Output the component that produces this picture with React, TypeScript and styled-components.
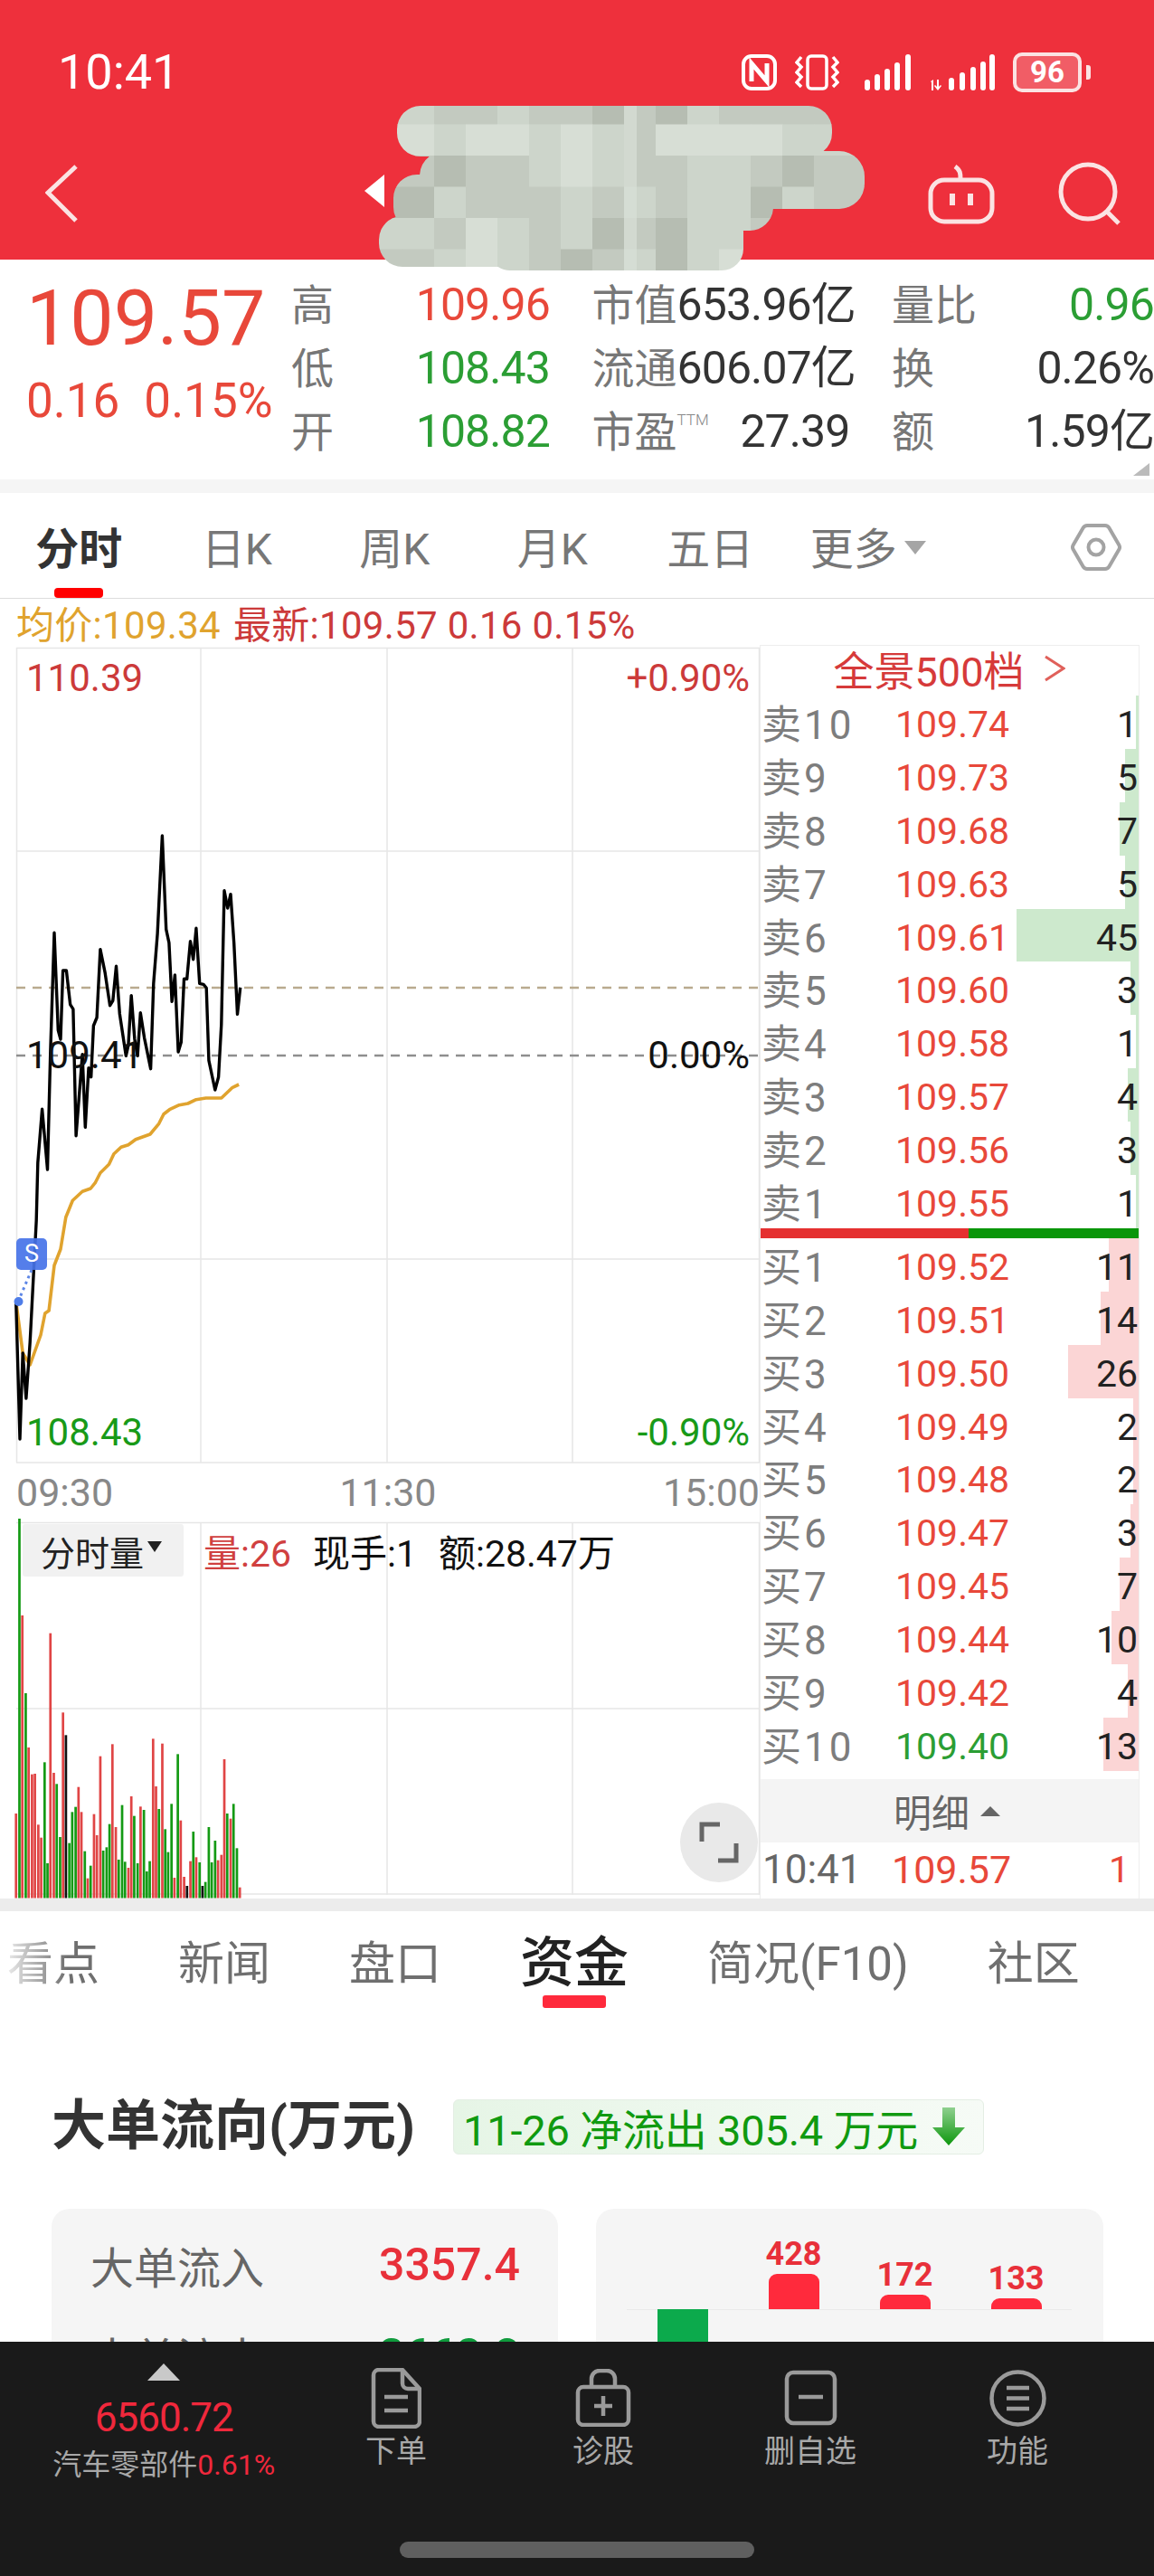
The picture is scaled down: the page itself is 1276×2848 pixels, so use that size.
import React from "react";
import styled, { createGlobalStyle } from "styled-components";

const FONT = `Roboto, "Noto Sans CJK SC", sans-serif`;
const RED = "#e8483a";
const GREEN = "#2b9e34";

const GlobalStyle = createGlobalStyle`
  html, body {
    margin: 0;
    padding: 0;
    background: #fff;
  }
  * {
    box-sizing: border-box;
  }
`;

// traced from the reference: x scale 1/1.867, y scale 1/3
const pricePoints = [
  [33, 1320], [41, 1776], [47, 1491], [54, 1641], [62, 1455], [75, 1050], [78, 860], [87, 682], [98, 882],
  [104, 500], [112, 97], [120, 420], [125, 450], [130, 222], [137, 222], [145, 335], [151, 350], [157, 770],
  [170, 500], [176, 742], [183, 545], [188, 575], [193, 405], [200, 378], [207, 152], [217, 230], [227, 338],
  [233, 322], [240, 208], [247, 365], [260, 505], [265, 470], [271, 305], [278, 450], [284, 505], [290, 362],
  [298, 445], [311, 548], [317, 265], [325, 100], [335, -225], [343, 85], [349, 130], [355, 325], [361, 237],
  [368, 492], [374, 460], [380, 250], [386, 250], [393, 125], [399, 185], [405, 82], [412, 265], [420, 268],
  [426, 280], [431, 520], [444, 618], [451, 575], [457, 400], [463, -43], [470, 15], [476, -31], [483, 130],
  [490, 367], [496, 278],
];

const avgPoints = [
  [33, 1320], [47, 1491], [62, 1530], [84, 1431], [93, 1359], [101, 1350], [112, 1200], [125, 1146], [136, 1040],
  [150, 985], [170, 955], [187, 945], [197, 925], [207, 893], [225, 865], [235, 830],
  [250, 808], [265, 800], [280, 782], [310, 765], [328, 730], [338, 698], [350, 683], [370, 668], [388, 663],
  [405, 650], [425, 645], [457, 645], [480, 610], [493, 600],
];

const toPolyline = (pts: number[][]) =>
  pts.map(([x, y]) => `${(x / 1.867 - 18).toFixed(1)},${(283 + y / 3).toFixed(1)}`).join(" ");

type VolBar = [number, "r" | "g" | "k", number];
const volumeBars: VolBar[] = [
  [33, "r", 1035], [40, "g", 57], [46, "r", 378], [53, "g", 636], [59, "r", 816], [66, "r", 905], [72, "r", 903],
  [79, "r", 1072], [85, "r", 1115], [92, "g", 865], [98, "g", 1200], [104, "r", 437], [111, "r", 900], [117, "g", 937],
  [124, "g", 1113], [130, "r", 700], [136, "k", 775], [143, "g", 1133], [149, "g", 1030], [156, "g", 1013],
  [162, "r", 947], [168, "r", 1030], [175, "g", 1160], [181, "r", 1250], [187, "g", 1208], [194, "r", 1037],
  [200, "r", 1107], [207, "r", 845], [213, "g", 1158], [220, "g", 1147], [226, "g", 1070], [232, "r", 805],
  [239, "r", 1080], [245, "g", 1188], [252, "g", 1007], [258, "g", 1195], [265, "r", 1215], [271, "r", 978],
  [277, "g", 1043], [284, "g", 1200], [290, "r", 1012], [297, "g", 1023], [303, "g", 1227], [309, "g", 1193],
  [316, "r", 787], [322, "r", 945], [328, "g", 1020], [335, "r", 803], [341, "g", 1087], [347, "g", 1163],
  [354, "g", 1003], [360, "r", 1248], [367, "g", 838], [373, "r", 1058], [380, "r", 1245], [386, "k", 1275],
  [393, "r", 1193], [399, "g", 1095], [405, "r", 1180], [412, "g", 1197], [418, "k", 1275], [424, "g", 1262],
  [431, "g", 1080], [437, "g", 1197], [444, "g", 1125], [450, "r", 1190], [457, "r", 1172], [463, "r", 855],
  [469, "g", 1035], [476, "r", 1052], [482, "g", 1003], [489, "g", 1150], [495, "r", 1280],
];
const volColor = { r: "#e04545", g: "#149a14", k: "#111" };

const sells = [
  ["卖10", "109.74", 1], ["卖9", "109.73", 5], ["卖8", "109.68", 7], ["卖7", "109.63", 5], ["卖6", "109.61", 45],
  ["卖5", "109.60", 3], ["卖4", "109.58", 1], ["卖3", "109.57", 4], ["卖2", "109.56", 3], ["卖1", "109.55", 1],
] as const;
const buys = [
  ["买1", "109.52", 11], ["买2", "109.51", 14], ["买3", "109.50", 26], ["买4", "109.49", 2], ["买5", "109.48", 2],
  ["买6", "109.47", 3], ["买7", "109.45", 7], ["买8", "109.44", 10], ["买9", "109.42", 4], ["买10", "109.40", 13],
] as const;

const mosaicPalette: Record<string, string> = {
  a: "#d7ded5", b: "#cdd5cb", c: "#c3cac0", d: "#b6bdb2", e: "#a8afa4",
};
const mosaicRows = [
  "bbccbccdcdbccccc",
  "aabaababcaaaabbb",
  "ccdccbabccbbcdcc",
  "ddbcccbcbcbbdbcc",
  "bbcabcbdcdbbcccc",
  "ccbabcdcbdbacccc",
];

function Mosaic() {
  return (
    <MosaicSvg viewBox="0 0 560 200" width="560" height="200">
      <defs>
        <clipPath id="smear">
          <rect x="29" y="14" width="481" height="56" rx="26" />
          <rect x="54" y="64" width="492" height="64" rx="28" />
          <rect x="25" y="90" width="420" height="62" rx="26" />
          <rect x="9" y="136" width="352" height="56" rx="26" />
          <rect x="130" y="130" width="282" height="66" rx="24" />
        </clipPath>
      </defs>
      <g clipPath="url(#smear)">
        {mosaicRows.map((row, r) =>
          row.split("").map((c, i) => (
            <rect key={`${r}-${i}`} x={i * 35} y={r * 34.5} width={35.5} height={35} fill={mosaicPalette[c]} />
          ))
        )}
        <rect x="280" y="0" width="14" height="200" fill="#d9e0d7" opacity="0.7" />
      </g>
    </MosaicSvg>
  );
}

export default function App() {
  return (
    <Page>
      <GlobalStyle />
      <ScrollArea>
        <Header>
          <StatusBar>
            <Clock>10:41</Clock>
            <StatusIcons>
              <svg width="39" height="40" viewBox="0 0 39 40" fill="none" stroke="#fff" strokeWidth="4">
                <rect x="2" y="2" width="35" height="36" rx="9" />
                <path d="M11 30V10l17 20V10" strokeWidth="5" />
              </svg>
              <svg width="49" height="40" viewBox="0 0 49 40" fill="none" stroke="#fff" strokeWidth="3.5">
                <rect x="14" y="2" width="21" height="36" rx="4" />
                <path d="M7 3L2 9l5 5-5 6 5 5-5 6 5 5" />
                <path d="M42 3l5 6-5 5 5 6-5 5 5 6-5 5" />
              </svg>
              <SignalIcon width="51" height="40" viewBox="0 0 51 40" fill="#fff">
                <rect x="0" y="28" width="6" height="12" rx="3" />
                <rect x="11" y="22" width="6" height="18" rx="3" />
                <rect x="22" y="16" width="6" height="24" rx="3" />
                <rect x="33" y="9" width="6" height="31" rx="3" />
                <rect x="45" y="0" width="6" height="40" rx="3" />
              </SignalIcon>
              <svg width="73" height="40" viewBox="0 0 73 40" fill="#fff">
                <path d="M2 30l3-2v12H3V31zM9 28h2v8l2-2 1 1-4 5-4-5 1-1 2 2z" />
                <rect x="22" y="26" width="6" height="14" rx="3" />
                <rect x="34" y="20" width="6" height="20" rx="3" />
                <rect x="46" y="14" width="6" height="26" rx="3" />
                <rect x="57" y="8" width="6" height="32" rx="3" />
                <rect x="67" y="0" width="6" height="40" rx="3" />
              </svg>
              <Battery>96</Battery>
            </StatusIcons>
          </StatusBar>
          <NavRow>
            <svg width="36" height="64" viewBox="0 0 36 64" fill="none" stroke="#fbe3e3" strokeWidth="5">
              <path d="M34 2L3 31l31 31" />
            </svg>
            <NavRight>
              <svg width="74" height="68" viewBox="0 0 74 68" fill="none" stroke="#fbe3e3" strokeWidth="5">
                <path d="M36 18c0-6 0-10-6-14" />
                <rect x="3" y="19" width="68" height="46" rx="15" />
                <path d="M27 34v13M47 34v13" strokeWidth="6" />
              </svg>
              <svg width="70" height="70" viewBox="0 0 70 70" fill="none" stroke="#fbe3e3" strokeWidth="5">
                <circle cx="33" cy="33" r="30" />
                <path d="M54 55l13 13" />
              </svg>
            </NavRight>
          </NavRow>
          <WhiteArrow />
          <Mosaic />
        </Header>

        <Quote>
          <QuoteMain>
            <BigPrice>109.57</BigPrice>
            <BigChange>
              <span>0.16</span>
              <span>0.15%</span>
            </BigChange>
          </QuoteMain>
          <QuoteGrid>
            <QuoteCell><QuoteLabel>高</QuoteLabel><QuoteValue $color={RED}>109.96</QuoteValue></QuoteCell>
            <QuoteCell><QuoteLabel>市值</QuoteLabel><QuoteValue>653.96亿</QuoteValue></QuoteCell>
            <QuoteCell><QuoteLabel>量比</QuoteLabel><QuoteValue $color={GREEN}>0.96</QuoteValue></QuoteCell>
            <QuoteCell><QuoteLabel>低</QuoteLabel><QuoteValue $color={GREEN}>108.43</QuoteValue></QuoteCell>
            <QuoteCell><QuoteLabel>流通</QuoteLabel><QuoteValue>606.07亿</QuoteValue></QuoteCell>
            <QuoteCell><QuoteLabel>换</QuoteLabel><QuoteValue>0.26%</QuoteValue></QuoteCell>
            <QuoteCell><QuoteLabel>开</QuoteLabel><QuoteValue $color={GREEN}>108.82</QuoteValue></QuoteCell>
            <QuoteCell><QuoteLabel>市盈<Ttm>TTM</Ttm></QuoteLabel><QuoteValue>27.39</QuoteValue></QuoteCell>
            <QuoteCell><QuoteLabel>额</QuoteLabel><QuoteValue>1.59亿</QuoteValue></QuoteCell>
          </QuoteGrid>
          <CornerMark />
        </Quote>

        <Band $h={15} $bg="#f5f5f5" />

        <PeriodTabs>
          <PeriodTab $active>分时</PeriodTab>
          <PeriodTab>日K</PeriodTab>
          <PeriodTab>周K</PeriodTab>
          <PeriodTab>月K</PeriodTab>
          <PeriodTab>五日</PeriodTab>
          <PeriodTab>更多<MoreCaret /></PeriodTab>
          <SettingsIcon width="56" height="52" viewBox="0 0 56 52" fill="none" stroke="#a3a3a3" strokeWidth="4">
            <path
              d="M18 2h20a5 5 0 0 1 4.3 2.5l11 19a5 5 0 0 1 0 5l-11 19A5 5 0 0 1 38 50H18a5 5 0 0 1-4.3-2.5l-11-19a5 5 0 0 1 0-5l11-19A5 5 0 0 1 18 2z"
            />
            <circle cx="28" cy="26" r="8.5" />
          </SettingsIcon>
        </PeriodTabs>

        <Legend>
          <LegendText $color="#e0a32e">均价:109.34</LegendText>
          <LegendText $color="#cc3a3a">最新:109.57 0.16 0.15%</LegendText>
        </Legend>

        <Market>
          <ChartColumn>
            <PriceChart>
              <ChartSvg width="822" height="900" viewBox="0 0 822 900" fill="none">
                <g stroke="#e6e6e6" strokeWidth="1.5">
                  <path d="M0 0.5H822M0 225H822M0 676H822M0 901H822" />
                  <path d="M0.5 0V901M204 0V901M410 0V901M615 0V901M821.5 0V901" />
                </g>
                <path d="M0 376H822" stroke="#b9aa8e" strokeWidth="2.5" strokeDasharray="10 8" />
                <path d="M0 451H822" stroke="#8e8e8e" strokeWidth="2.5" strokeDasharray="10 8" />
                <polyline points={toPolyline(avgPoints)} stroke="#e0a32e" strokeWidth="3.6" strokeLinejoin="round" />
                <polyline points={toPolyline(pricePoints)} stroke="#000" strokeWidth="3.4" strokeLinejoin="round" />
                <path d="M2 723L17 688" stroke="#5d86e6" strokeWidth="3" strokeDasharray="3 4" />
                <circle cx="2.5" cy="723" r="5" fill="#4f7de8" />
              </ChartSvg>
              <ChartLabel $y={34} $left $color="#cc3a3a">110.39</ChartLabel>
              <ChartLabel $y={34} $color="#cc3a3a">+0.90%</ChartLabel>
              <ChartLabel $y={451} $left $color="#111">109.41</ChartLabel>
              <ChartLabel $y={451} $color="#111">0.00%</ChartLabel>
              <ChartLabel $y={868} $left $color="#189a18">108.43</ChartLabel>
              <ChartLabel $y={868} $color="#189a18">-0.90%</ChartLabel>
              <SignalBadge>S</SignalBadge>
            </PriceChart>
            <TimeAxis>
              <span>09:30</span>
              <span>11:30</span>
              <span>15:00</span>
            </TimeAxis>
            <VolumeChart>
              <ChartSvg width="822" height="412" viewBox="0 0 822 412" fill="none">
                <g stroke="#e6e6e6" strokeWidth="1.5">
                  <path d="M0 0.5H822M0 206H822M0 411H822" />
                  <path d="M204 0V412M410 0V412M615 0V412M821.5 0V412" />
                </g>
                {volumeBars.map(([x, c, top]) => {
                  const y = top / 3 - 23;
                  return <rect key={x} x={x / 1.867 - 19.3} y={y} width={2.7} height={415.5 - y} fill={volColor[c]} />;
                })}
              </ChartSvg>
              <VolumeHead>
                <VolumeSelect>分时量<SelectCaret /></VolumeSelect>
                <VolumeInfo $color="#d04040">量:26</VolumeInfo>
                <VolumeInfo>现手:1</VolumeInfo>
                <VolumeInfo>额:28.47万</VolumeInfo>
              </VolumeHead>
              <ExpandButton>
                <svg width="44" height="46" viewBox="0 0 44 46" fill="none" stroke="#666" strokeWidth="5">
                  <path d="M3 22V3h20" />
                  <path d="M41 24v19H21" />
                </svg>
              </ExpandButton>
            </VolumeChart>
          </ChartColumn>

          <Book>
            <BookTitle>
              全景500档
              <svg width="24" height="30" viewBox="0 0 24 30" fill="none" stroke="#e0605a" strokeWidth="3">
                <path d="M2 2l20 13L2 28" />
              </svg>
            </BookTitle>
            {sells.map(([name, price, qty]) => (
              <BookRow key={name}>
                <QtyBar $side="sell" style={{ width: qty * 3 }} />
                <BookName>{name}</BookName>
                <BookPrice>{price}</BookPrice>
                <BookQty>{qty}</BookQty>
              </BookRow>
            ))}
            <BalanceBar>
              <BalancePart $w={55} $color="#e53030" />
              <BalancePart $w={45} $color="#0a960a" />
            </BalanceBar>
            {buys.map(([name, price, qty]) => (
              <BookRow key={name}>
                <QtyBar $side="buy" style={{ width: qty * 3 }} />
                <BookName>{name}</BookName>
                <BookPrice $green={name === "买10"}>{price}</BookPrice>
                <BookQty>{qty}</BookQty>
              </BookRow>
            ))}
            <DetailHead>明细<DetailCaret /></DetailHead>
            <TradeRow>
              <TradeTime>10:41</TradeTime>
              <TradePrice>109.57</TradePrice>
              <TradeQty>1</TradeQty>
            </TradeRow>
          </Book>
        </Market>

        <Band $h={14} $bg="#ececec" />

        <SectionTabs>
          <SectionTab $fade>看点</SectionTab>
          <SectionTab>新闻</SectionTab>
          <SectionTab>盘口</SectionTab>
          <SectionTab $active>资金</SectionTab>
          <SectionTab>简况(F10)</SectionTab>
          <SectionTab>社区</SectionTab>
        </SectionTabs>

        <FlowHead>
          <FlowTitle>大单流向(万元)</FlowTitle>
          <NetBadge>
            11-26 净流出 305.4 万元
            <svg width="36" height="42" viewBox="0 0 36 42">
              <defs>
                <linearGradient id="arrow" x1="0" y1="0" x2="0" y2="1">
                  <stop offset="0" stopColor="#8fd08f" />
                  <stop offset="1" stopColor="#0d970d" />
                </linearGradient>
              </defs>
              <path d="M11 0h14v22h11L18 42 0 22h11z" fill="url(#arrow)" />
            </svg>
          </NetBadge>
        </FlowHead>

        <Cards>
          <Card>
            <AmountRow>
              <AmountName>大单流入</AmountName>
              <Amount $color="#e8303a">3357.4</Amount>
            </AmountRow>
            <AmountRow>
              <AmountName>大单流出</AmountName>
              <Amount $color="#0f9a3c">3662.8</Amount>
            </AmountRow>
          </Card>
          <Card>
            <Plot>
              <PlotCol>
                <DownBar />
              </PlotCol>
              <PlotCol>
                <PlotValue>428</PlotValue>
                <UpBar $h={39} />
              </PlotCol>
              <PlotCol>
                <PlotValue>172</PlotValue>
                <UpBar $h={16} />
              </PlotCol>
              <PlotCol>
                <PlotValue>133</PlotValue>
                <UpBar $h={12} />
              </PlotCol>
            </Plot>
          </Card>
        </Cards>
      </ScrollArea>

      <BottomBar>
        <BottomItems>
          <IndexBlock>
            <IndexCaret />
            <IndexValue>6560.72</IndexValue>
            <IndexName>
              汽车零部件<IndexPct>0.61%</IndexPct>
            </IndexName>
          </IndexBlock>
          <BottomItem>
            <IconSlot>
              <svg width="56" height="67" viewBox="0 0 56 67" fill="none" stroke="#9a9a9a" strokeWidth="4.5">
                <path d="M9 2h26l19 21v36a6 6 0 0 1-6 6H9a6 6 0 0 1-6-6V8a6 6 0 0 1 6-6z" strokeLinejoin="round" />
                <path d="M35 2v15a6 6 0 0 0 6 6h13" />
                <path d="M15 32h26M15 47h26" />
              </svg>
            </IconSlot>
            下单
          </BottomItem>
          <BottomItem>
            <IconSlot>
              <svg width="62" height="64" viewBox="0 0 62 64" fill="none" stroke="#9a9a9a" strokeWidth="4.5">
                <path d="M18 20V11a9 9 0 0 1 9-9h8a9 9 0 0 1 9 9v9" />
                <rect x="3" y="20" width="56" height="42" rx="6" />
                <path d="M31 30v22M21 41h20" />
              </svg>
            </IconSlot>
            诊股
          </BottomItem>
          <BottomItem>
            <IconSlot>
              <svg width="59" height="62" viewBox="0 0 59 62" fill="none" stroke="#9a9a9a" strokeWidth="4.5">
                <rect x="3" y="3" width="53" height="56" rx="7" />
                <path d="M16 30h27" />
              </svg>
            </IconSlot>
            删自选
          </BottomItem>
          <BottomItem>
            <IconSlot>
              <svg width="63" height="63" viewBox="0 0 63 63" fill="none" stroke="#9a9a9a" strokeWidth="4.5">
                <circle cx="31.5" cy="31.5" r="29" />
                <path d="M19 20h25M19 31.5h25M19 43h25" />
              </svg>
            </IconSlot>
            功能
          </BottomItem>
        </BottomItems>
        <HomeBar />
      </BottomBar>
    </Page>
  );
}

const Page = styled.div`
  width: 1276px;
  height: 2848px;
  display: flex;
  flex-direction: column;
  overflow: hidden;
  background: #fff;
  font-family: ${FONT};
`;

const ScrollArea = styled.div`
  flex: 1;
  min-height: 0;
  overflow: hidden;
`;

const Header = styled.div`
  position: relative;
  height: 287px;
  background: #ee303c;
`;

const StatusBar = styled.div`
  height: 160px;
  padding: 0 68px 0 64px;
  display: flex;
  align-items: center;
  justify-content: space-between;
`;

const Clock = styled.div`
  font-size: 54px;
  color: #fff;
  line-height: 1;
`;

const StatusIcons = styled.div`
  display: flex;
  align-items: center;
  gap: 20px;
`;

const SignalIcon = styled.svg`
  margin-left: 8px;
`;

const Battery = styled.div`
  position: relative;
  width: 76px;
  height: 44px;
  margin-right: 12px;
  border: 4px solid #fbe3e3;
  border-radius: 10px;
  background: rgba(255, 255, 255, 0.22);
  color: #fff;
  font-size: 33px;
  font-weight: 700;
  line-height: 36px;
  text-align: center;

  &::after {
    content: "";
    position: absolute;
    right: -14px;
    top: 10px;
    width: 5px;
    height: 16px;
    border-radius: 0 3px 3px 0;
    background: #fbe3e3;
  }
`;

const NavRow = styled.div`
  height: 127px;
  padding: 0 36px 20px 50px;
  display: flex;
  align-items: center;
  justify-content: space-between;
`;

const NavRight = styled.div`
  display: flex;
  align-items: center;
  gap: 70px;
`;

const WhiteArrow = styled.div`
  position: absolute;
  left: 403px;
  top: 193px;
  width: 0;
  height: 0;
  border-top: 18px solid transparent;
  border-bottom: 18px solid transparent;
  border-right: 22px solid #fff;
`;

const MosaicSvg = styled.svg`
  position: absolute;
  left: 410px;
  top: 103px;
  z-index: 2;
`;

const Quote = styled.div`
  position: relative;
  height: 243px;
  display: flex;
`;

const QuoteMain = styled.div`
  width: 322px;
  flex: none;
  padding: 23px 0 0 29px;
`;

const BigPrice = styled.div`
  font-size: 86px;
  line-height: 84px;
  color: ${RED};
`;

const BigChange = styled.div`
  margin-top: 24px;
  display: flex;
  gap: 27px;
  font-size: 53px;
  line-height: 50px;
  color: ${RED};
  white-space: nowrap;
`;

const QuoteGrid = styled.div`
  flex: 1;
  padding-top: 15px;
  display: grid;
  grid-template-columns: 286px 285px 1fr;
  grid-auto-rows: 70px;
  column-gap: 46.5px;
`;

const QuoteCell = styled.div`
  display: flex;
  align-items: center;
  justify-content: space-between;
  white-space: nowrap;
`;

const QuoteLabel = styled.span`
  font-size: 47px;
  line-height: 1;
  color: #777;
`;

const Ttm = styled.span`
  font-size: 17px;
  font-weight: 300;
  color: #888;
  vertical-align: 24px;
  line-height: 0;
`;

const QuoteValue = styled.span<{ $color?: string }>`
  font-size: 50px;
  line-height: 1;
  letter-spacing: -0.9px;
  color: ${(p) => p.$color || "#333"};
`;

const CornerMark = styled.div`
  position: absolute;
  right: 5px;
  bottom: 4px;
  width: 0;
  height: 0;
  border-left: 18px solid transparent;
  border-bottom: 14px solid #bbb;
`;

const Band = styled.div<{ $h: number; $bg: string }>`
  height: ${(p) => p.$h}px;
  background: ${(p) => p.$bg};
`;

const PeriodTabs = styled.div`
  height: 117px;
  display: flex;
  align-items: stretch;
  border-bottom: 1.5px solid #ddd;
`;

const PeriodTab = styled.div<{ $active?: boolean }>`
  position: relative;
  flex: 0 0 174.5px;
  display: flex;
  align-items: center;
  justify-content: center;
  gap: 8px;
  font-size: 48px;
  font-weight: ${(p) => (p.$active ? 700 : 400)};
  color: ${(p) => (p.$active ? "#333" : "#777")};

  &::after {
    content: "";
    display: ${(p) => (p.$active ? "block" : "none")};
    position: absolute;
    left: 60px;
    bottom: 0;
    width: 54px;
    height: 11px;
    border-radius: 4px;
    background: #f00;
  }
`;

const MoreCaret = styled.i`
  width: 0;
  height: 0;
  margin-top: 4px;
  border-left: 12px solid transparent;
  border-right: 12px solid transparent;
  border-top: 15px solid #a5a5a5;
`;

const SettingsIcon = styled.svg`
  margin: 34px 0 0 137px;
`;

const Legend = styled.div`
  height: 51px;
  padding: 5px 0 0 18px;
  display: flex;
  gap: 14px;
`;

const LegendText = styled.span<{ $color: string }>`
  font-size: 42px;
  line-height: 50px;
  letter-spacing: 0.3px;
  color: ${(p) => p.$color};
  white-space: nowrap;
`;

const Market = styled.div`
  height: 1386px;
  display: flex;
`;

const ChartColumn = styled.div`
  width: 840px;
  padding: 3px 0 0 18px;
  flex: none;
`;

const PriceChart = styled.div`
  position: relative;
  height: 901px;
`;

const ChartSvg = styled.svg`
  display: block;
  overflow: visible;
`;

const ChartLabel = styled.span<{ $y: number; $left?: boolean; $color: string }>`
  position: absolute;
  top: ${(p) => p.$y - 25}px;
  ${(p) => (p.$left ? "left: 11px;" : "right: 11px;")}
  font-size: 42px;
  line-height: 50px;
  color: ${(p) => p.$color};
`;

const SignalBadge = styled.div`
  position: absolute;
  left: 0;
  top: 653px;
  width: 34px;
  height: 35px;
  border-radius: 5px;
  background: rgba(70, 115, 232, 0.92);
  color: #fff;
  font-size: 27px;
  line-height: 35px;
  text-align: center;
`;

const TimeAxis = styled.div`
  height: 66px;
  display: flex;
  align-items: center;
  justify-content: space-between;
  font-size: 43px;
  color: #888;
`;

const VolumeChart = styled.div`
  position: relative;
  height: 412px;
`;

const VolumeHead = styled.div`
  position: absolute;
  left: 7px;
  top: 1px;
  display: flex;
  align-items: center;
  font-size: 41px;
`;

const VolumeSelect = styled.div`
  width: 178px;
  height: 58px;
  margin-right: 22px;
  padding-left: 20px;
  display: flex;
  align-items: center;
  gap: 4px;
  border-radius: 3px;
  background: rgba(240, 240, 240, 0.95);
  color: #222;
  font-size: 38px;
`;

const SelectCaret = styled.i`
  width: 0;
  height: 0;
  margin-top: -8px;
  border-left: 8px solid transparent;
  border-right: 8px solid transparent;
  border-top: 12px solid #222;
`;

const VolumeInfo = styled.span<{ $color?: string }>`
  margin-right: 24px;
  color: ${(p) => p.$color || "#111"};
  white-space: nowrap;
`;

const ExpandButton = styled.div`
  position: absolute;
  right: 2px;
  top: 310px;
  width: 86px;
  height: 88px;
  display: flex;
  align-items: center;
  justify-content: center;
  border-radius: 50%;
  background: #e9e9e9;
`;

const Book = styled.div`
  width: 420px;
  flex: none;
  border-left: 1.5px solid #eee;
  border-right: 1.5px solid #eee;
`;

const BookTitle = styled.div`
  height: 56px;
  padding: 0 0 5px 0;
  display: flex;
  align-items: center;
  justify-content: center;
  gap: 22px;
  border-top: 1.5px solid #eee;
  font-size: 45px;
  color: #d63a3a;
`;

const BookRow = styled.div`
  position: relative;
  height: 58.9px;
  padding: 0 1px 0 1px;
  display: grid;
  grid-template-columns: 148px 1fr auto;
  align-items: center;
  font-size: 41px;
`;

const QtyBar = styled.div<{ $side: "sell" | "buy" }>`
  position: absolute;
  right: 0;
  top: 0;
  bottom: 0;
  background: ${(p) => (p.$side === "sell" ? "#cde9cd" : "#fbd5d5")};
`;

const BookName = styled.span`
  position: relative;
  top: -3px;
  color: #7d7d7d;
  font-size: 44px;
  letter-spacing: 3px;
  white-space: nowrap;
`;

const BookPrice = styled.span<{ $green?: boolean }>`
  position: relative;
  font-size: 41px;
  color: ${(p) => (p.$green ? GREEN : RED)};
`;

const BookQty = styled.span`
  position: relative;
  color: #222;
`;

const BalanceBar = styled.div`
  height: 11px;
  display: flex;
`;

const BalancePart = styled.div<{ $w: number; $color: string }>`
  width: ${(p) => p.$w}%;
  background: ${(p) => p.$color};
`;

const DetailHead = styled.div`
  height: 70px;
  margin-top: 9px;
  padding-right: 6px;
  display: flex;
  align-items: center;
  justify-content: center;
  gap: 12px;
  background: #f4f4f4;
  color: #666;
  font-size: 42px;
`;

const DetailCaret = styled.i`
  width: 0;
  height: 0;
  border-left: 11px solid transparent;
  border-right: 11px solid transparent;
  border-bottom: 11px solid #666;
  margin-top: 2px;
`;

const TradeRow = styled.div`
  height: 60px;
  padding: 0 10px 0 2px;
  display: grid;
  grid-template-columns: 143px 1fr auto;
  align-items: center;
`;

const TradeTime = styled.span`
  font-size: 44px;
  color: #666;
`;

const TradePrice = styled.span`
  font-size: 43px;
  color: ${RED};
`;

const TradeQty = styled.span`
  font-size: 41px;
  color: ${RED};
`;

const SectionTabs = styled.div`
  height: 127px;
  padding: 0 0 11px 8px;
  display: flex;
  align-items: center;
  gap: 87px;
`;

const SectionTab = styled.div<{ $active?: boolean; $fade?: boolean }>`
  position: relative;
  font-size: ${(p) => (p.$active ? 60 : 51)}px;
  font-weight: ${(p) => (p.$active ? 500 : 400)};
  line-height: 1;
  color: ${(p) => (p.$active ? "#222" : "#6f6f6f")};
  white-space: nowrap;
  ${(p) => p.$fade && "mask-image: linear-gradient(to right, rgba(0,0,0,0.15), #000 65%);"}

  &::after {
    content: "";
    display: ${(p) => (p.$active ? "block" : "none")};
    position: absolute;
    left: 50%;
    top: calc(100% + 5px);
    width: 70px;
    height: 14px;
    margin-left: -35px;
    border-radius: 3px;
    background: #ff2a3c;
  }
`;

const FlowHead = styled.div`
  margin-top: 80px;
  padding-left: 57px;
  height: 62px;
  display: flex;
  align-items: center;
  gap: 42px;
`;

const FlowTitle = styled.div`
  font-size: 60px;
  font-weight: 700;
  line-height: 1;
  color: #333;
  white-space: nowrap;
`;

const NetBadge = styled.div`
  width: 587px;
  height: 61px;
  padding: 0 20px 0 10px;
  display: flex;
  align-items: center;
  justify-content: space-between;
  border: 1px solid #e4eee4;
  border-radius: 6px;
  background: linear-gradient(to right, #e6f5e6, #f6fbf6);
  color: #109a10;
  font-size: 47px;
  letter-spacing: -0.2px;
  white-space: nowrap;
`;

const Cards = styled.div`
  margin-top: 60px;
  padding: 0 56px 0 57px;
  display: grid;
  grid-template-columns: 560px 561px;
  gap: 42px;
`;

const Card = styled.div`
  height: 400px;
  border-radius: 20px;
  background: #f5f5f5;
`;

const AmountRow = styled.div`
  height: 54px;
  margin: 35px 42px 0 43px;
  display: flex;
  align-items: center;
  justify-content: space-between;

  & + & {
    margin-top: 46px;
  }
`;

const AmountName = styled.span`
  font-size: 48px;
  color: #666;
`;

const Amount = styled.span<{ $color: string }>`
  font-size: 50px;
  font-weight: 500;
  color: ${(p) => p.$color};
`;

const Plot = styled.div`
  height: 112px;
  margin: 0 35px 0 34px;
  display: grid;
  grid-template-columns: repeat(4, 1fr);
  border-bottom: 1.5px solid #e9e9e9;
`;

const PlotCol = styled.div`
  position: relative;
  display: flex;
  flex-direction: column;
  align-items: center;
  justify-content: flex-end;
`;

const PlotValue = styled.span`
  font-size: 36px;
  font-weight: 700;
  line-height: 44px;
  color: #e8303a;
`;

const UpBar = styled.div<{ $h: number }>`
  width: 56px;
  height: ${(p) => p.$h}px;
  border-radius: 9px 9px 0 0;
  background: #ff2a3c;
`;

const DownBar = styled.div`
  position: absolute;
  top: 100%;
  left: 34px;
  width: 56px;
  height: 60px;
  background: #0caa4c;
`;

const BottomBar = styled.div`
  position: relative;
  height: 259px;
  flex: none;
  background: #1a1a1a;
`;

const BottomItems = styled.div`
  display: grid;
  grid-template-columns: 323.5px repeat(4, 229px);
`;

const IndexBlock = styled.div`
  padding: 24px 19px 0 58px;
  display: flex;
  flex-direction: column;
  align-items: center;
`;

const IndexCaret = styled.i`
  width: 0;
  height: 0;
  border-left: 18px solid transparent;
  border-right: 18px solid transparent;
  border-bottom: 19px solid #c9c9c9;
`;

const IndexValue = styled.div`
  margin-top: 16px;
  font-size: 44px;
  line-height: 50px;
  letter-spacing: -1px;
  color: #f0283c;
`;

const IndexName = styled.div`
  margin-top: 7px;
  font-size: 32px;
  line-height: 40px;
  color: #a8a8a8;
  white-space: nowrap;
`;

const IndexPct = styled.span`
  color: #f0283c;
`;

const BottomItem = styled.div`
  padding-top: 27px;
  display: flex;
  flex-direction: column;
  align-items: center;
  font-size: 34px;
  line-height: 44px;
  color: #a8a8a8;
  white-space: nowrap;
`;

const IconSlot = styled.div`
  height: 70px;
  margin-bottom: 2px;
  display: flex;
  align-items: center;
`;

const HomeBar = styled.div`
  position: absolute;
  left: 442px;
  top: 221px;
  width: 392px;
  height: 18px;
  border-radius: 9px;
  background: #5f5f5f;
`;
